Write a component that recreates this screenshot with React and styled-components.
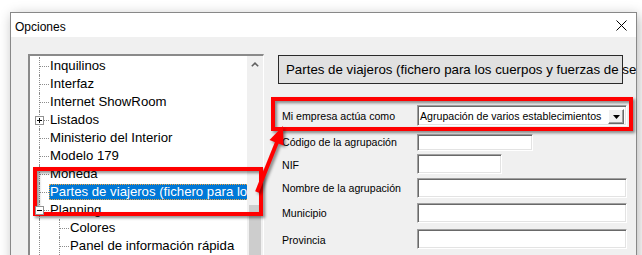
import React from 'react';
import styled, { createGlobalStyle } from 'styled-components';

const Global = createGlobalStyle`
  html, body { margin: 0; padding: 0; background: #fff; overflow: hidden; }
  body { font-family: "Liberation Sans", Arial, sans-serif; color: #000; }
  * { box-sizing: border-box; }
`;

const Page = styled.div`
  position: relative;
  width: 642px;
  height: 255px;
  padding: 12px 0 0 10px;
  overflow: hidden;
`;

const Window = styled.div`
  width: 627px;
  height: 272px;
  border: 1px solid #888;
  background: #f0f0f0;
  box-shadow: 2px 3px 12px rgba(0, 0, 0, 0.28);
  display: flex;
  flex-direction: column;
  overflow: hidden;
`;

const TitleBar = styled.div`
  height: 24px;
  flex: none;
  background: #fff;
  display: flex;
  align-items: center;
  justify-content: space-between;
  padding: 0 9px 0 4px;
`;

const Title = styled.span`
  font-size: 12px;
  margin-top: 3px;
`;

const Body = styled.div`
  flex: 1;
  min-height: 0;
  display: flex;
  gap: 14px;
  padding: 17px 0 0 17px;
`;

const TreeBox = styled.div`
  width: 236px;
  flex: none;
  height: 230px;
  display: flex;
  background: #fff;
  border-style: solid;
  border-width: 2px 1px 0 2px;
  border-color: #8a8a8a #fff #fff #8a8a8a;
`;

const TreeList = styled.div`
  flex: 1;
  min-width: 0;
  overflow: hidden;
  padding-top: 1px;
`;

const Row = styled.div`
  height: 18px;
  display: flex;
  white-space: nowrap;
`;

const Cell = styled.span`
  position: relative;
  flex: none;
  width: ${p => p.$w}px;
  height: 18px;
  &::before {
    content: '';
    display: ${p => (p.$vline ? 'block' : 'none')};
    position: absolute;
    left: 9px;
    top: 0;
    height: 18px;
    border-left: 1px dotted #8c8c8c;
  }
  &::after {
    content: '';
    display: ${p => (p.$hline ? 'block' : 'none')};
    position: absolute;
    left: 10px;
    top: 9px;
    width: 9px;
    border-top: 1px dotted #8c8c8c;
  }
`;

const Expander = styled.svg`
  position: absolute;
  left: 5px;
  top: 5px;
  z-index: 1;
`;

const Label = styled.span`
  height: 16px;
  margin-top: 1px;
  line-height: 16px;
  padding: 0 1px;
  font-size: 13.2px;
  background: ${p => (p.$selected ? '#0078d7' : 'transparent')};
  color: ${p => (p.$selected ? '#fff' : '#000')};
  outline: ${p => (p.$selected ? '1px dotted #f0a33c' : 'none')};
  outline-offset: -1px;
`;

const Scrollbar = styled.div`
  width: 16px;
  flex: none;
  background: #f0f0f0;
  display: flex;
  flex-direction: column;
`;

const ScrollArrow = styled.div`
  height: 17px;
  display: flex;
  align-items: center;
  justify-content: center;
`;

const Thumb = styled.div`
  flex: 1;
  margin: 132px 2px 0 2px;
  background: #cdcdcd;
`;

const RightCol = styled.div`
  flex: 1;
  min-width: 0;
  display: flex;
  flex-direction: column;
  padding-top: 1px;
`;

const HeaderBox = styled.div`
  width: 345px;
  height: 29px;
  flex: none;
  border: 1px solid #2a2a2a;
  background: #e1e1e1;
  padding-left: 7px;
  font-size: 13.3px;
  line-height: 28px;
  white-space: nowrap;
`;

const Form = styled.div`
  display: flex;
  flex-direction: column;
  padding-left: 4px;
`;

const FieldRow = styled.div`
  display: flex;
  align-items: center;
  margin-top: ${p => p.$mt}px;
`;

const FieldLabel = styled.span`
  width: 135px;
  flex: none;
  font-size: 10.6px;
  white-space: nowrap;
  margin-top: ${p => p.$dy || 0}px;
`;

const sunken = `
  background: #fff;
  border: 1px solid;
  border-color: #a0a0a0 #fff #fff #a0a0a0;
  box-shadow: inset 1px 1px 0 #696969, inset -1px -1px 0 #e3e3e3;
`;

const Input = styled.div`
  ${sunken}
  width: ${p => p.$w}px;
  height: ${p => p.$h}px;
`;

const Select = styled.div`
  ${sunken}
  width: 210px;
  height: 21px;
  display: flex;
  align-items: center;
  justify-content: space-between;
  padding: 0 2px 0 2px;
  font-size: 10.6px;
  white-space: nowrap;
`;

const DropButton = styled.div`
  width: 16px;
  height: 15px;
  margin-top: 2px;
  background: #f0f0f0;
  border: 1px solid;
  border-color: #fff #696969 #696969 #fff;
  box-shadow: inset -1px -1px 0 #a0a0a0;
  display: flex;
  align-items: center;
  justify-content: center;
`;

const Overlay = styled.div`
  position: absolute;
  inset: 0;
  pointer-events: none;
`;

const RedBox = styled.div`
  position: absolute;
  left: ${p => p.$x}px;
  top: ${p => p.$y}px;
  width: ${p => p.$w}px;
  height: ${p => p.$h}px;
  border: 4px solid #ff0000;
  filter: drop-shadow(2px 2px 1.5px rgba(0, 0, 0, 0.45));
`;

const ArrowSvg = styled.svg`
  position: absolute;
  left: 0;
  top: 0;
  filter: drop-shadow(2px 2px 1.5px rgba(0, 0, 0, 0.45));
`;

const items = [
  { label: 'Inquilinos', level: 0 },
  { label: 'Interfaz', level: 0 },
  { label: 'Internet ShowRoom', level: 0 },
  { label: 'Listados', level: 0, expander: 'plus' },
  { label: 'Ministerio del Interior', level: 0 },
  { label: 'Modelo 179', level: 0 },
  { label: 'Moneda', level: 0 },
  { label: 'Partes de viajeros (fichero para los cuerpos y fuerzas de seguridad)', level: 0, selected: true },
  { label: 'Planning', level: 0, expander: 'minus' },
  { label: 'Colores', level: 1 },
  { label: 'Panel de información rápida', level: 1 },
];

function ExpanderBox({ kind }) {
  return (
    <Expander width="9" height="9" viewBox="0 0 9 9">
      <rect x="0.5" y="0.5" width="8" height="8" fill="#fff" stroke="#919191" />
      <line x1="2" y1="4.5" x2="7" y2="4.5" stroke="#000" />
      {kind === 'plus' && <line x1="4.5" y1="2" x2="4.5" y2="7" stroke="#000" />}
    </Expander>
  );
}

function TreeRow({ item }) {
  return (
    <Row>
      {item.level > 0 && <Cell $w={20} $vline />}
      <Cell $w={19} $vline $hline>
        {item.expander && <ExpanderBox kind={item.expander} />}
      </Cell>
      <Label $selected={item.selected}>{item.label}</Label>
    </Row>
  );
}

export default function App() {
  return (
    <>
      <Global />
      <Page>
        <Window>
          <TitleBar>
            <Title>Opciones</Title>
            <svg width="11" height="11" viewBox="0 0 11 11">
              <path d="M0.5 0.5 L10.5 10.5 M10.5 0.5 L0.5 10.5" stroke="#000" strokeWidth="1" />
            </svg>
          </TitleBar>
          <Body>
            <TreeBox>
              <TreeList>
                {items.map(it => (
                  <TreeRow key={it.label} item={it} />
                ))}
              </TreeList>
              <Scrollbar>
                <ScrollArrow>
                  <svg width="8" height="5" viewBox="0 0 8 5">
                    <path d="M0.8 4.3 L4 1.2 L7.2 4.3" fill="none" stroke="#606060" strokeWidth="1.6" />
                  </svg>
                </ScrollArrow>
                <Thumb />
              </Scrollbar>
            </TreeBox>
            <RightCol>
              <HeaderBox>Partes de viajeros (fichero para los cuerpos y fuerzas de seguridad)</HeaderBox>
              <Form>
                <FieldRow $mt={21}>
                  <FieldLabel>Mi empresa actúa como</FieldLabel>
                  <Select>
                    <span>Agrupación de varios establecimientos</span>
                    <DropButton>
                      <svg width="7" height="4" viewBox="0 0 7 4">
                        <path d="M0 0 H7 L3.5 4 Z" fill="#000" />
                      </svg>
                    </DropButton>
                  </Select>
                </FieldRow>
                <FieldRow $mt={8}>
                  <FieldLabel $dy={-2}>Código de la agrupación</FieldLabel>
                  <Input $w={116} $h={17} />
                </FieldRow>
                <FieldRow $mt={3}>
                  <FieldLabel $dy={2}>NIF</FieldLabel>
                  <Input $w={85} $h={20} />
                </FieldRow>
                <FieldRow $mt={4}>
                  <FieldLabel>Nombre de la agrupación</FieldLabel>
                  <Input $w={210} $h={20} />
                </FieldRow>
                <FieldRow $mt={5}>
                  <FieldLabel>Municipio</FieldLabel>
                  <Input $w={210} $h={20} />
                </FieldRow>
                <FieldRow $mt={6}>
                  <FieldLabel $dy={1}>Provincia</FieldLabel>
                  <Input $w={210} $h={20} />
                </FieldRow>
              </Form>
            </RightCol>
          </Body>
        </Window>
        <Overlay>
          <RedBox $x={33} $y={167} $w={230} $h={49} />
          <RedBox $x={271} $y={97} $w={362} $h={34} />
          <ArrowSvg width="642" height="255" viewBox="0 0 642 255">
            <line x1="257" y1="192" x2="277.5" y2="141" stroke="#ff0000" strokeWidth="4" />
            <polygon points="283,126 283.5,145.5 269.5,140" fill="#ff0000" />
          </ArrowSvg>
        </Overlay>
      </Page>
    </>
  );
}
